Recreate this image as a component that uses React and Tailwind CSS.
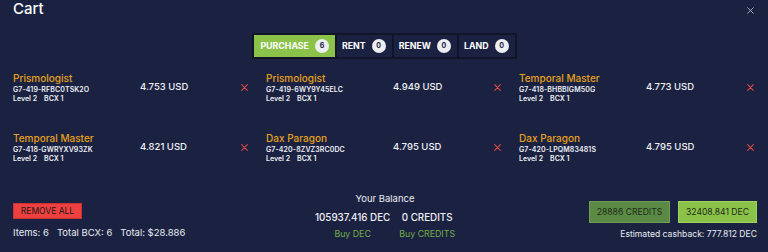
import React from 'react'

const ITEMS = [
  { name: 'Prismologist', code: 'G7-419-RFBC0TSK2O', price: '4.753 USD' },
  { name: 'Prismologist', code: 'G7-419-6WY9Y45ELC', price: '4.949 USD' },
  { name: 'Temporal Master', code: 'G7-418-BHBBIGM50G', price: '4.773 USD' },
  { name: 'Temporal Master', code: 'G7-418-GWRYXV93ZK', price: '4.821 USD' },
  { name: 'Dax Paragon', code: 'G7-420-8ZVZ3RC0DC', price: '4.795 USD' },
  { name: 'Dax Paragon', code: 'G7-420-LPQM83481S', price: '4.795 USD' },
]

const TABS = [
  { label: 'PURCHASE', count: 6, active: true },
  { label: 'RENT', count: 0 },
  { label: 'RENEW', count: 0 },
  { label: 'LAND', count: 0 },
]

function CloseIcon({ className, color, width = 1.2 }) {
  return (
    <svg className={className} viewBox="0 0 10 10" fill="none" stroke={color} strokeWidth={width} strokeLinecap="round">
      <path d="M1 1l8 8M9 1l-8 8" />
    </svg>
  )
}

function CartItem({ item }) {
  return (
    <div className="flex items-center">
      <div className="w-[127px] shrink-0">
        <div className="text-[10px] leading-[12px] font-medium text-[#e5a11c] whitespace-nowrap">{item.name}</div>
        <div className="text-[7px] leading-[9px] font-semibold text-[#eef0f6] mt-[1px] whitespace-nowrap tracking-[0.1px]">{item.code}</div>
        <div className="flex gap-[7px] text-[7px] leading-[9px] font-semibold text-[#eef0f6]">
          <span>Level 2</span>
          <span>BCX 1</span>
        </div>
      </div>
      <div className="flex-1 text-[9.5px] leading-[12px] font-medium text-[#eef0f6] -mt-[2px]">{item.price}</div>
      <CloseIcon className="w-[7px] h-[7px] mr-[2px]" color="#d94848" width={1.6} />
    </div>
  )
}

export default function App() {
  return (
    <div
      className="w-[768px] h-[252px] bg-[#1b2241] text-[#eef0f6] overflow-hidden"
      style={{ fontFamily: 'Inter, "Noto Sans", sans-serif' }}
    >
      {/* Header */}
      <div className="flex justify-between pl-[13px] pr-[14px] h-[18px]">
        <h1 className="text-[15px] leading-[18px] font-medium text-white">Cart</h1>
        <CloseIcon className="w-[7px] h-[7px] mt-[7px]" color="#c9cfdc" width={1.1} />
      </div>

      {/* Tabs */}
      <div className="flex justify-center mt-[15px] ml-[1px]">
        <div className="flex">
          {TABS.map((tab, i) => (
            <div
              key={tab.label}
              className={`flex items-center h-[26px] gap-[6px] border-2 border-[#10152a] ${i > 0 ? '-ml-[2px]' : ''} ${tab.active ? 'bg-[#8bc34a] pl-[6px] pr-[6px]' : 'bg-[#1b2241] pl-[5px] pr-[6px]'}`}
            >
              <span className="text-[8.8px] font-bold text-white">{tab.label}</span>
              <span className="w-[14px] h-[14px] rounded-full bg-[#eceef2] text-[#1b2241] text-[7px] font-bold flex items-center justify-center">
                {tab.count}
              </span>
            </div>
          ))}
        </div>
      </div>

      {/* Items */}
      <div className="grid grid-cols-[237px_237px_237px] gap-x-[16px] gap-y-[29px] pl-[13px] mt-[13px]">
        {ITEMS.map((item) => (
          <CartItem key={item.code} item={item} />
        ))}
      </div>

      {/* Footer */}
      <div className="grid grid-cols-3 pl-[13px] pr-[11px] mt-[30px]">
        <div className="flex flex-col items-start">
          <button className="mt-[10px] h-[16px] w-[69px] bg-[#ef4040] border border-[#c93232] text-[8.5px] text-[#1b1b1b] flex items-center justify-center">
            REMOVE ALL
          </button>
          <div className="mt-[8px] flex gap-[8px] text-[9.5px] leading-[12px] text-[#e8ebf2]">
            <span>Items: 6</span>
            <span>Total BCX: 6</span>
            <span>Total: $28.886</span>
          </div>
        </div>

        <div className="flex flex-col items-center">
          <div className="text-[9.5px] leading-[12px] text-[#e8ebf2]">Your Balance</div>
          <div className="flex gap-[9px] mt-[6px]">
            <div className="flex flex-col items-center">
              <span className="text-[9.8px] leading-[13px] font-medium">105937.416 DEC</span>
              <span className="mt-[3.5px] text-[8.8px] leading-[12px] text-[#72ad45]">Buy DEC</span>
            </div>
            <div className="flex flex-col items-center">
              <span className="text-[9.8px] leading-[13px] font-medium">0 CREDITS</span>
              <span className="mt-[3.5px] text-[8.8px] leading-[12px] text-[#72ad45]">Buy CREDITS</span>
            </div>
          </div>
        </div>

        <div className="flex flex-col items-end">
          <div className="flex gap-[8px] mt-[8px]">
            <button className="h-[22px] w-[81px] bg-[#5b8a44] border border-[#6f9d55] text-[8.6px] text-[#1e2b18] flex items-center justify-center">
              28886 CREDITS
            </button>
            <button className="h-[22px] w-[79px] bg-[#8bc34a] border border-[#9fd35c] text-[8.6px] text-[#1e2b18] flex items-center justify-center">
              32408.841 DEC
            </button>
          </div>
          <div className="mt-[4.5px] text-[8.6px] leading-[12px] text-[#e8ebf2]">Estimated cashback: 777.812 DEC</div>
        </div>
      </div>
    </div>
  )
}
